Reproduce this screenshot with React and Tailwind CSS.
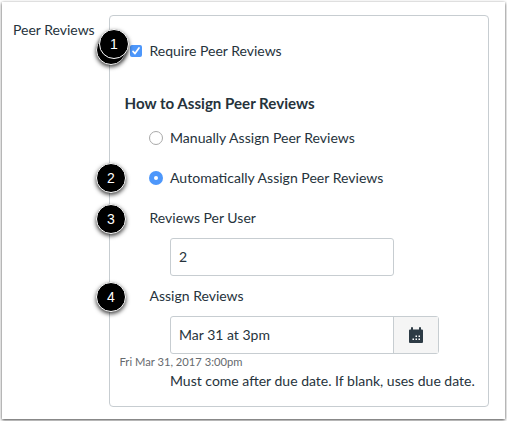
function StepBadge({ number, className }) {
  return (
    <span
      className={`absolute flex size-[30px] items-center justify-center rounded-full border border-white bg-black font-['Liberation_Sans',sans-serif] text-[14px] leading-none text-white shadow-[0_2px_4px_rgba(0,0,0,0.75)] ${className}`}
    >
      {number}
    </span>
  );
}

function Radio({ checked }) {
  if (checked) {
    return (
      <span className="flex size-[14px] items-center justify-center rounded-full bg-[#4d97fb]">
        <span className="size-1 rounded-full bg-white" />
      </span>
    );
  }
  return <span className="size-[14px] rounded-full border border-[#a9a9a9] bg-white" />;
}

function Checkbox() {
  return (
    <span className="flex size-3 items-center justify-center rounded-[2px] bg-[#4d97fb]">
      <svg viewBox="0 0 12 12" className="size-3" fill="none" stroke="white" strokeWidth="1.7">
        <path d="M3 6.4 5 8.6 9 3" strokeLinecap="round" strokeLinejoin="round" />
      </svg>
    </span>
  );
}

function CalendarIcon() {
  return (
    <svg viewBox="0 0 14 16" className="mr-px h-4 w-[14px]">
      <path
        d="M2 2.500V1q0-1 1-1t1 1v1.500h6V1q0-1 1-1t1 1v1.500h1q1 0 1 1V15q0 1-1 1H1q-1 0-1-1V3.500q0-1 1-1Z"
        fill="#2d3b45"
      />
      <path
        d="M6.500 8.500H8V10H6.500ZM9.500 8.500H11V10H9.500ZM3.500 11.500H5V13H3.500ZM6.500 11.500H8V13H6.500ZM9.500 11.500H11V13H9.500Z"
        fill="white"
      />
    </svg>
  );
}

export default function App() {
  return (
    <div className="h-[421px] w-[507px] bg-white px-0.5 pt-0.5 font-[Lato,sans-serif] text-[14px] leading-5 text-[#26333c]">
      <div className="flex h-[417px] w-[503px] bg-white pt-[13px] shadow-[0_1px_3px_rgba(0,0,0,0.75)]">
        <div className="w-[107px] shrink-0 pt-[5px] pl-[11px]">Peer Reviews</div>
        <div className="h-[392px] w-[380px] rounded-[4px] border border-[#c7cdd1] pt-[25px]">
          <div className="relative flex h-5 items-center gap-[7.5px] pl-5">
            <StepBadge number="" className="-left-[14px] -top-[6px]" />
            <StepBadge number={1} className="-left-[11px] -top-[12px]" />
            <Checkbox />
            <span>Require Peer Reviews</span>
          </div>
          <h2 className="mt-8 pl-[14.5px] text-[15.1px] font-bold">How to Assign Peer Reviews</h2>
          <div className="mt-[15px] flex items-center gap-[7px] pl-[39px]">
            <Radio />
            <span className="text-[14.05px]">Manually Assign Peer Reviews</span>
          </div>
          <div className="relative mt-5 flex items-center gap-[7px] pl-[39px]">
            <StepBadge number={2} className="-left-[14px] -top-[5px]" />
            <Radio checked />
            <span className="text-[14.05px]">Automatically Assign Peer Reviews</span>
          </div>
          <div className="relative mt-5 pl-[39.5px]">
            <StepBadge number={3} className="-left-[14px] -top-[4px]" />
            Reviews Per User
          </div>
          <div className="mt-[10px] ml-[60px] flex h-[38px] w-[224px] items-center rounded-[3px] border border-[#c7cdd1] pl-2">
            2
          </div>
          <div className="relative mt-[10px] pl-[39.5px]">
            <StepBadge number={4} className="-left-[14px] -top-[4px]" />
            Assign Reviews
          </div>
          <div className="mt-[10px] ml-[60px] flex h-[38px] w-[269px] rounded-[3px] border border-[#c7cdd1]">
            <div className="flex flex-1 items-center pl-2">Mar 31 at 3pm</div>
            <div className="flex w-[45px] items-center justify-center border-l border-[#c7cdd1] bg-[#f5f5f5]">
              <CalendarIcon />
            </div>
          </div>
          <div className="pl-[9.5px] text-[11.2px] leading-4 text-[#666a6e]">Fri Mar 31, 2017 3:00pm</div>
          <div className="mt-px pl-[60px] whitespace-nowrap">
            Must come after due date. If blank, uses due date.
          </div>
        </div>
      </div>
    </div>
  );
}
